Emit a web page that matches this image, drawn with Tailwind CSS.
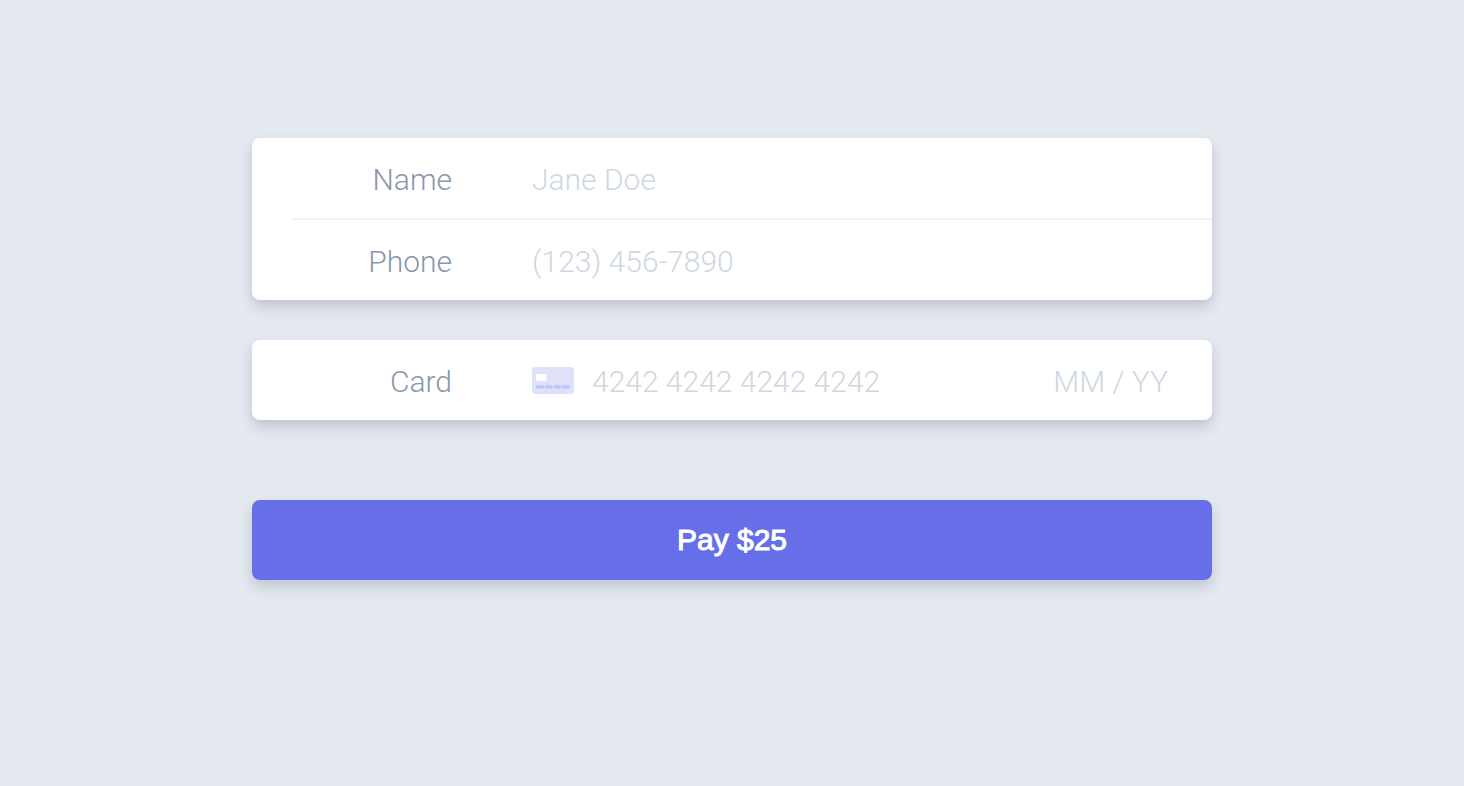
<!DOCTYPE html>
<html lang="en">
<head>
<meta charset="utf-8">
<meta name="viewport" content="width=device-width, initial-scale=1">
<title>Payment</title>
<script src="https://cdn.jsdelivr.net/npm/@tailwindcss/browser@4"></script>
</head>
<body class="min-h-screen bg-[#e5eaf1] font-['Roboto','Liberation_Sans',sans-serif] text-[30px] font-light">
<main class="mx-auto w-full max-w-[1040px] px-10 pt-[138px] pb-20">
<form class="flex flex-col">
  <div class="mb-10 rounded-lg bg-white pl-10 shadow-[0_8px_18px_0_rgba(49,49,93,0.10),0_6px_12px_0_rgba(0,0,0,0.09)]">
    <div class="flex h-20 items-center pt-0.5">
      <label for="name" class="w-40 shrink-0 text-right text-[#8898aa]">Name</label>
      <input id="name" type="text" placeholder="Jane Doe" class="ml-20 h-full min-w-0 flex-1 bg-transparent text-[#32325d] outline-none placeholder:text-[#cfd7df]">
    </div>
    <div class="flex h-[82px] items-center border-t-2 border-[#f0f5fa] pt-0.5">
      <label for="phone" class="w-40 shrink-0 text-right text-[#8898aa]">Phone</label>
      <input id="phone" type="tel" placeholder="(123) 456-7890" class="ml-20 h-full min-w-0 flex-1 bg-transparent text-[#32325d] outline-none placeholder:text-[#cfd7df]">
    </div>
  </div>
  <div class="mb-20 flex h-20 items-center rounded-lg bg-white px-10 pt-0.5 shadow-[0_8px_18px_0_rgba(49,49,93,0.10),0_6px_12px_0_rgba(0,0,0,0.09)]">
    <label for="card" class="w-40 shrink-0 text-right text-[#8898aa]">Card</label>
    <svg class="ml-20 h-7 w-[42px] shrink-0" viewBox="0 0 42 28" aria-hidden="true">
      <rect y="0" width="42" height="27" rx="3.5" fill="#dfe1fb"/>
      <rect x="4" y="7" width="10.5" height="7" rx="1" fill="#fff"/>
      <g fill="#bfc3f6"><rect x="4" y="18.3" width="8" height="3.2" rx="1.2"/><rect x="12.8" y="18.3" width="7.6" height="3.2" rx="1.2"/><rect x="21.4" y="18.3" width="7.6" height="3.2" rx="1.2"/><rect x="30" y="18.3" width="7.6" height="3.2" rx="1.2"/></g>
    </svg>
    <input id="card" type="text" inputmode="numeric" placeholder="4242 4242 4242 4242" class="ml-[18px] h-full min-w-0 flex-1 bg-transparent text-[#32325d] outline-none placeholder:text-[#cfd7df]">
    <input type="text" aria-label="Expiry date" placeholder="MM / YY" class="mr-1 h-full w-32 bg-transparent text-right text-[#32325d] outline-none placeholder:text-[#cfd7df]">
  </div>
  <button type="submit" class="h-20 rounded-lg bg-[#666ee8] pb-0.5 font-['Liberation_Sans',sans-serif] font-normal text-white [-webkit-text-stroke:1px_white] shadow-[0_8px_18px_0_rgba(49,49,93,0.10),0_6px_12px_0_rgba(0,0,0,0.09)]">Pay $25</button>
</form>
</main>
</body>
</html>
